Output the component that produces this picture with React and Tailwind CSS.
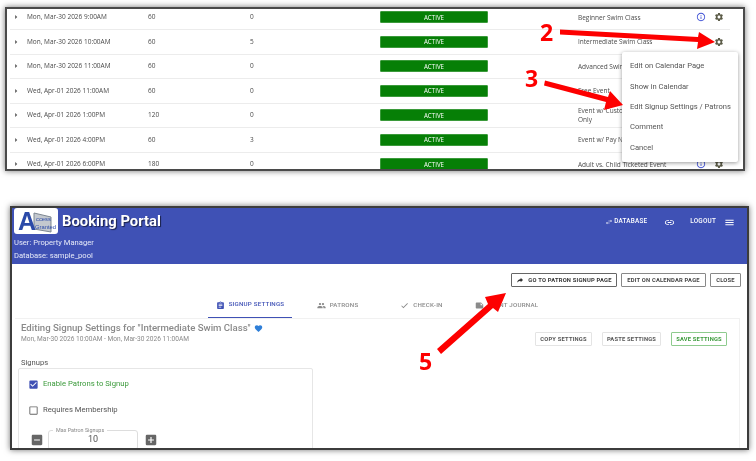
import React from "react";
import {
  MdAddBox,
  MdArrowRight,
  MdAssignment,
  MdCheck,
  MdCheckBox,
  MdCheckBoxOutlineBlank,
  MdFavorite,
  MdIndeterminateCheckBox,
  MdInfoOutline,
  MdLink,
  MdMenu,
  MdNote,
  MdPeople,
  MdReply,
  MdSettings,
  MdSwapHoriz,
} from "react-icons/md";

const rows = [
  { date: "Mon, Mar-30 2026 9:00AM", mins: 60, count: 0, name: "Beginner Swim Class", info: true },
  { date: "Mon, Mar-30 2026 10:00AM", mins: 60, count: 5, name: "Intermediate Swim Class" },
  { date: "Mon, Mar-30 2026 11:00AM", mins: 60, count: 0, name: "Advanced Swim Class" },
  { date: "Wed, Apr-01 2026 11:00AM", mins: 60, count: 0, name: "Free Event" },
  { date: "Wed, Apr-01 2026 1:00PM", mins: 120, count: 0, name: "Event w/ Custom Questions Members Only" },
  { date: "Wed, Apr-01 2026 4:00PM", mins: 60, count: 3, name: "Event w/ Pay Now" },
  { date: "Wed, Apr-01 2026 6:00PM", mins: 180, count: 0, name: "Adult vs. Child Ticketed Event", info: true },
];

const menuItems = ["Edit on Calendar Page", "Show in Calendar", "Edit Signup Settings / Patrons", "Comment", "Cancel"];

const tabs = [
  { label: "SIGNUP SETTINGS", Icon: MdAssignment, w: "w-[84px]", active: true },
  { label: "PATRONS", Icon: MdPeople, w: "w-[91px]" },
  { label: "CHECK-IN", Icon: MdCheck, w: "w-[77px]" },
  { label: "EVENT JOURNAL", Icon: MdNote, w: "w-[93px]" },
];

const Row = ({ row }) => (
  <div className="flex h-[24.5px] w-[720px] shrink-0 items-center border-b border-[#ececec] text-[6.5px] text-[#4a4a4a]">
    <MdArrowRight className="ml-[1px] mr-[6px] shrink-0 text-[#555]" size={10} />
    <span className="w-[121px] shrink-0">{row.date}</span>
    <span className="w-[102px] shrink-0">{row.mins}</span>
    <span className="w-[130px] shrink-0">{row.count}</span>
    <span className="flex h-[12px] w-[108px] shrink-0 items-center justify-center rounded-[1px] border border-[#3b9a3b] bg-[#067f06] text-[6.2px] text-white">
      ACTIVE
    </span>
    <span className="ml-[90px] w-[115px] shrink-0 leading-[9px]">{row.name}</span>
    <span className="ml-[1px] flex w-[14px] shrink-0 justify-center">
      {row.info && <MdInfoOutline className="text-[#3f51d5]" size={10} />}
    </span>
    <MdSettings className="ml-[6px] shrink-0 text-[#5c5c48]" size={10} />
  </div>
);

const EventsPanel = () => (
  <div className="relative ml-[5px] flex h-[164px] w-[740px] flex-col overflow-hidden border-2 border-[#4a4a4a] bg-white pl-[3px] shadow-[0_0_6px_rgba(0,0,0,0.55)] [font-family:'Open_Sans',sans-serif]">
    <div className="-mt-[3.5px] flex flex-col">
      {rows.map((row) => (
        <Row key={row.date} row={row} />
      ))}
    </div>
    <div className="absolute left-[615px] top-[43px] flex h-[110px] w-[116px] flex-col rounded-[2px] bg-white py-[4px] pl-[8px] text-[7.6px] text-[#555] shadow-[0_1px_4px_rgba(0,0,0,0.4)] [font-family:Roboto,sans-serif]">
      {menuItems.map((item) => (
        <span key={item} className="flex h-[20.3px] items-center whitespace-nowrap">
          {item}
        </span>
      ))}
    </div>
  </div>
);

const Logo = () => (
  <div className="h-[26px] w-[44px] shrink-0 overflow-hidden rounded-[3px] bg-white">
    <svg viewBox="0 0 44 26" width="44" height="26">
      <path d="M20 5 L37 9 L37 24 L20 21 Z" fill="#c3c8ce" stroke="#7d8791" strokeWidth="1" />
      <text x="4" y="22" fontFamily="Liberation Sans, sans-serif" fontSize="25" fontWeight="700" fill="#2b4aa8">A</text>
      <text x="22" y="13" fontFamily="Liberation Sans, sans-serif" fontSize="5.8" fill="#2b4aa8">ccess</text>
      <text x="21" y="20.5" fontFamily="Liberation Sans, sans-serif" fontSize="5.8" fill="#2b4aa8">Granted</text>
    </svg>
  </div>
);

const Header = () => (
  <div className="flex h-[56px] shrink-0 justify-between bg-[#3f51b5] pl-[2px] pr-[12px] text-white">
    <div className="flex flex-col">
      <div className="flex items-center gap-[4px]">
        <Logo />
        <span className="text-[14.8px] font-bold leading-none [text-shadow:1px_1px_1px_rgba(0,0,0,0.6)]">Booking Portal</span>
      </div>
      <span className="mt-[2px] text-[7.6px] leading-[13px] text-[#e6e9f8]">User: Property Manager</span>
      <span className="text-[7.6px] leading-[13px] text-[#e6e9f8]">Database: sample_pool</span>
    </div>
    <div className="mt-[8px] flex h-[12px] items-center text-[6.4px] font-medium tracking-[0.2px]">
      <MdSwapHoriz size={8} />
      <span className="ml-[1px]">DATABASE</span>
      <MdLink className="ml-[17px]" size={11} />
      <span className="ml-[15px]">LOGOUT</span>
      <MdMenu className="ml-[8px]" size={11} />
    </div>
  </div>
);

const OutlineButton = ({ children, className }) => (
  <span className={`flex h-[14px] items-center justify-center whitespace-nowrap rounded-[1px] border text-[5.8px] font-bold tracking-[0.2px] ${className}`}>
    {children}
  </span>
);

const Tabs = () => (
  <div className="ml-[196px] mt-[9px] flex h-[22px] items-start">
    {tabs.map(({ label, Icon, w, active }) => (
      <div
        key={label}
        className={`flex h-[22px] ${w} items-center justify-center gap-[4px] pb-[3px] text-[6.2px] font-medium tracking-[0.2px] ${
          active ? "border-b border-[#3f51b5] text-[#3f51b5]" : "text-[#8a8a8a]"
        }`}
      >
        <Icon className="shrink-0" size={9} />
        <span className="whitespace-nowrap">{label}</span>
      </div>
    ))}
  </div>
);

const Signups = () => (
  <div className="mt-[1px] flex h-[90px] w-[295px] flex-col rounded-[2px] border border-[#e6e6e6] pl-[10px] pt-[7px] text-[7.7px] text-[#555]">
    <div className="flex h-[16px] items-center gap-[4px]">
      <MdCheckBox className="-ml-[1px] text-[#3f51b5]" size={11} />
      <span className="text-[#3b9a3b]">Enable Patrons to Signup</span>
    </div>
    <div className="mt-[10px] flex h-[16px] items-center gap-[4px]">
      <MdCheckBoxOutlineBlank className="-ml-[1px] text-[#666]" size={11} />
      <span>Requires Membership</span>
    </div>
    <div className="mt-[12px] flex items-center">
      <MdIndeterminateCheckBox className="ml-[1px] text-[#666]" size={14} />
      <div className="relative ml-[4px] flex h-[20px] w-[90px] items-center justify-center rounded-[3px] border border-[#ddd] text-[9px]">
        10
        <span className="absolute -top-[4px] left-[4px] bg-white px-[3px] text-[5.4px] leading-[7px] text-[#888]">Max Patron Signups</span>
      </div>
      <MdAddBox className="ml-[6px] text-[#666]" size={14} />
    </div>
  </div>
);

const SettingsPanel = () => (
  <div className="ml-[10px] flex h-[244px] w-[739px] flex-col overflow-hidden border-2 border-[#3c3c3c] bg-white shadow-[0_0_6px_rgba(0,0,0,0.55)] [font-family:Roboto,sans-serif]">
    <Header />
    <div className="mr-[6px] mt-[9px] flex justify-end gap-[4px] text-[#444]">
      <OutlineButton className="w-[106px] gap-[4px] border-[#666] text-[#333]">
        <MdReply className="-scale-x-100" size={8} />
        GO TO PATRON SIGNUP PAGE
      </OutlineButton>
      <OutlineButton className="w-[85px] border-[#888]">EDIT ON CALENDAR PAGE</OutlineButton>
      <OutlineButton className="w-[31px] border-[#888]">CLOSE</OutlineButton>
    </div>
    <Tabs />
    <div className="ml-[3px] mr-[7px] flex grow flex-col border-t border-r border-[#f1f1f1] pl-[6px]">
      <div className="mt-[3px] flex items-start justify-between pr-[12px]">
        <div className="flex flex-col">
          <span className="flex items-center gap-[3px] text-[9.6px] font-medium leading-[12px] text-[#8a8a8a]">
            Editing Signup Settings for "Intermediate Swim Class"
            <MdFavorite className="text-[#2f7fd8]" size={9} />
          </span>
          <span className="mt-[1px] text-[6.6px] leading-[9px] text-[#8a8a8a]">Mon, Mar-30 2026 10:00AM - Mon, Mar-30 2026 11:00AM</span>
        </div>
        <div className="mt-[10px] flex gap-[10px] text-[#555]">
          <OutlineButton className="w-[57px] border-[#e4e4e4]">COPY SETTINGS</OutlineButton>
          <OutlineButton className="w-[59px] border-[#e4e4e4]">PASTE SETTINGS</OutlineButton>
          <OutlineButton className="w-[56px] border-[#8ecb8e] text-[#3b9a3b]">SAVE SETTINGS</OutlineButton>
        </div>
      </div>
      <span className="mt-[12px] text-[7.6px] leading-[10px] text-[#555]">Signups</span>
      <div className="-ml-[3px] -mt-[1px]">
        <Signups />
      </div>
    </div>
  </div>
);

// red callout arrows drawn over both panels
const Callouts = () => (
  <>
    <svg className="pointer-events-none absolute left-0 top-0" width="756" height="461">
      <g fill="#fd0000">
        <polygon points="560,29.5 698,37 699,32 715,42 697,49 698,42 560,34.5" />
        <polygon points="545,80.5 608,97 610,91 623,105 604,110 606,102 544,85.5" />
        <polygon points="437,349 488,304 485,297 506,293 498,312 493,308 441,354" />
      </g>
    </svg>
    <span className="absolute left-[540px] top-[17px] text-[23px] font-bold leading-[30px] text-[#fd0000] [font-family:'Open_Sans',sans-serif]">2</span>
    <span className="absolute left-[525px] top-[63px] text-[23px] font-bold leading-[30px] text-[#fd0000] [font-family:'Open_Sans',sans-serif]">3</span>
    <span className="absolute left-[419px] top-[346px] text-[23px] font-bold leading-[30px] text-[#fd0000] [font-family:'Open_Sans',sans-serif]">5</span>
  </>
);

export default function App() {
  return (
    <div className="relative h-[461px] w-[756px] overflow-hidden bg-white pt-[7px] blur-[0.3px]">
      <EventsPanel />
      <div className="h-[35px]" />
      <SettingsPanel />
      <Callouts />
    </div>
  );
}
